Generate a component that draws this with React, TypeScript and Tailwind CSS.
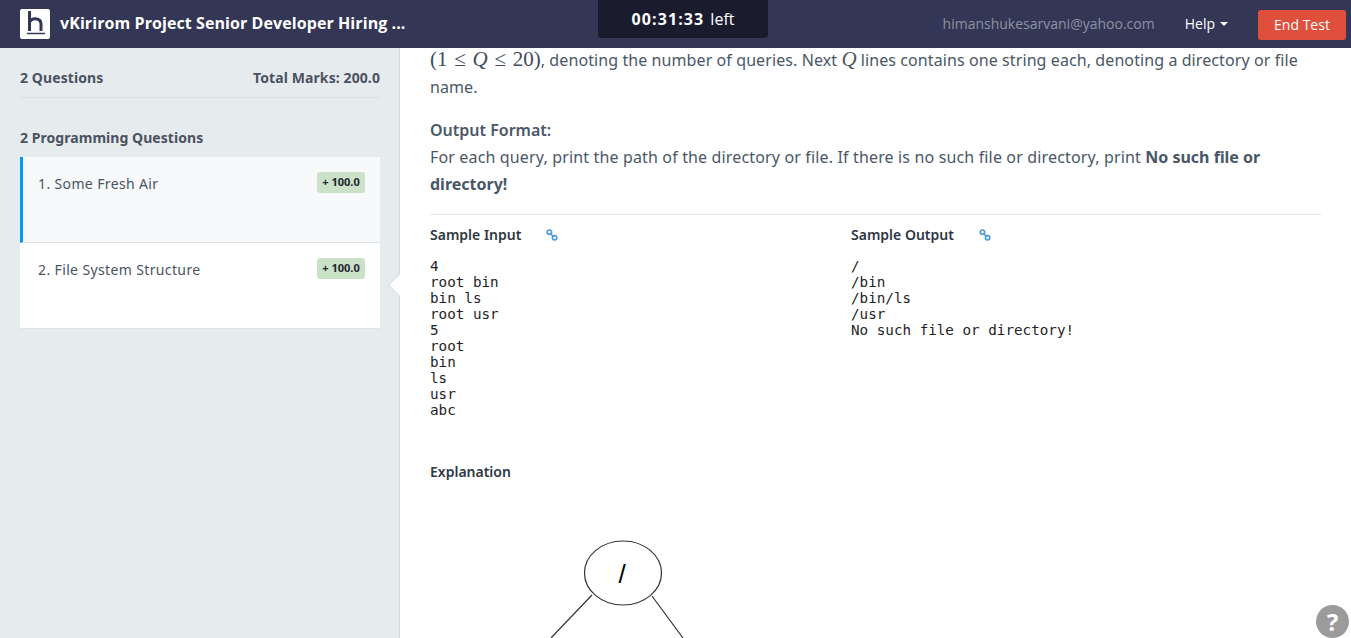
const sans = "font-['Noto_Sans','Open_Sans',sans-serif]"
const openSans = "font-['Open_Sans',sans-serif]"

const questions = [
  { title: "1. Some Fresh Air", active: true },
  { title: "2. File System Structure", active: false },
]

const sampleInput = ["4", "root bin", "bin ls", "root usr", "5", "root", "bin", "ls", "usr", "abc"]
const sampleOutput = ["/", "/bin", "/bin/ls", "/usr", "No such file or directory!"]

function LinkIcon() {
  return (
    <svg viewBox="0 0 12 12" className="h-3 w-3" fill="none" stroke="#4a9ad8" strokeWidth="1.6">
      <circle cx="3.4" cy="3.2" r="2.2" />
      <circle cx="8.6" cy="8.8" r="2.2" />
      <path d="M4.8 4.800 7.200 7.200" />
    </svg>
  )
}

function Header() {
  return (
    <header className="relative flex h-12 shrink-0 items-center bg-[#333654] pl-5 pr-[5px]">
      <div className="flex h-[30px] w-[30px] items-center justify-center rounded-[2px] bg-white">
        <svg viewBox="0 0 30 30" className="h-[30px] w-[30px]" fill="none" stroke="#333654">
          <path d="M9.500 2v20M9.500 13.500c1-2.500 3.200-3.800 5.500-3.800 3.500 0 6 1.800 6 5.300V22" strokeWidth="3" />
          <path d="M7 24.500h18" strokeWidth="1.500" />
        </svg>
      </div>
      <div className={`mb-[2px] ml-[10px] text-[16px] font-bold tracking-[0.08px] text-white ${openSans}`}>vKirirom Project Senior Developer Hiring ...</div>
      <div className={`absolute left-[598px] top-0 flex h-[38px] w-[170px] items-center justify-center rounded-b-[4px] bg-[#1a1c2e] pb-[1px] text-[16px] text-white ${openSans}`}>
        <span className="font-bold tracking-[1.1px]">00:31:33</span>
        <span className="ml-[6px]">left</span>
      </div>
      <div className={`mb-[2px] ml-auto text-[14px] text-[#8b93a5] ${openSans}`}>himanshukesarvani@yahoo.com</div>
      <div className={`mb-[2px] ml-[30px] flex items-center text-[14px] text-white ${openSans}`}>
        Help
        <span className="ml-[5px] mt-[1px] h-0 w-0 border-x-[4px] border-t-[4px] border-x-transparent border-t-white" />
      </div>
      <button className={`ml-[30px] mt-[2px] h-[30px] w-[88px] rounded-[3px] bg-[#e04f3b] pb-[2px] text-[14px] text-white ${openSans}`}>End Test</button>
    </header>
  )
}

function Sidebar() {
  return (
    <aside className="relative w-[400px] shrink-0 border-r border-r-[#d3dade] bg-[#e6ebed] pl-5 pr-[19px]">
      <div className="flex h-[50px] items-end justify-between border-b border-[#d9dfe3] pb-[9px] text-[14px] font-bold tracking-[0.1px] text-[#4a5361]">
        <span>2 Questions</span>
        <span>Total Marks: 200.0</span>
      </div>
      <div className="mt-[30px] text-[14px] font-bold leading-[20px] tracking-[0.05px] text-[#4a5361]">2 Programming Questions</div>
      <div className="mt-[9px]">
        {questions.map((q) => (
          <div
            key={q.title}
            className={
              q.active
                ? "flex h-[86px] items-start justify-between border-b border-b-[#dde3e7] border-l-[3px] border-l-[#0099ff] bg-[#f7f9fb] pl-[15px] pr-[15px] pt-[15px]"
                : "flex h-[86px] items-start justify-between border-b border-b-[#dde3e7] bg-white pl-[18px] pr-[15px] pt-[15px]"
            }
          >
            <span className="text-[14px] leading-[24px] tracking-[0.37px] text-[#4a5361]">{q.title}</span>
            <span className="flex h-[21px] w-[48px] items-center justify-center rounded-[3px] bg-[#cbe1c8] text-[11px] font-bold text-[#22282f]">+ 100.0</span>
          </div>
        ))}
      </div>
      <div className="absolute right-[-8px] top-[229px] h-[16px] w-[16px] rotate-45 border-b border-l border-[#d3dade] bg-white" />
    </aside>
  )
}

function MathRange() {
  return (
    <span className="font-['Liberation_Serif',serif] text-[21px] leading-none tracking-normal text-[#3f4a59]">
      (1 <span className="mx-[1.5px]">≤</span> <i>Q</i> <span className="mx-[1.5px]">≤</span> 20)
    </span>
  )
}

function SampleBlock({ title, lines }: { title: string; lines: string[] }) {
  return (
    <div>
      <div className="flex items-center gap-[25px] text-[14px] font-semibold leading-[20px] text-[#2f3742]">
        <span>{title}</span>
        <LinkIcon />
      </div>
      <pre className="mt-[13px] font-['DejaVu_Sans_Mono','Liberation_Mono',monospace] text-[14.25px] leading-[16px] text-[#1f2328]">{lines.join("\n")}</pre>
    </div>
  )
}

function Content() {
  return (
    <main className="-mt-px min-w-0 flex-1 bg-white pl-[30px] pr-[30px]">
      <p className="text-[16px] leading-[27px] tracking-[0.09px] text-[#4a5768]">
        <MathRange />, denoting the number of queries. Next{" "}
        <i className="font-['Liberation_Serif',serif] text-[21px] leading-none tracking-normal">Q</i> lines contains one string each, denoting a directory or file name.
      </p>
      <div className="mt-[16px] text-[16px] font-semibold leading-[27px] text-[#4a5768]">Output Format:</div>
      <p className="text-[16px] leading-[27px] tracking-[0.15px] text-[#4a5768]">
        For each query, print the path of the directory or file. If there is no such file or directory, print <b className="font-bold tracking-normal">No such file or directory!</b>
      </p>
      <div className="mt-[16px] grid grid-cols-[421px_1fr] border-t border-[#e3e6e9] pt-[10px]">
        <SampleBlock title="Sample Input" lines={sampleInput} />
        <SampleBlock title="Sample Output" lines={sampleOutput} />
      </div>
      <div className="mt-[44px] text-[14px] font-semibold leading-[20px] text-[#2f3742]">Explanation</div>
      <svg viewBox="0 0 300 160" className="ml-[100px] mt-[48px] h-[160px] w-[300px]" fill="none" stroke="#333" strokeWidth="1.200">
        <ellipse cx="93" cy="43" rx="38.500" ry="32" fill="#fff" />
        <path d="M62 65 21 108M122 66 153 108" />
        <text x="92" y="53" fill="#000" stroke="none" fontSize="26" textAnchor="middle" fontFamily="Liberation Sans, sans-serif">/</text>
      </svg>
    </main>
  )
}

export default function App() {
  return (
    <div className={`relative flex h-[638px] w-full flex-col overflow-hidden bg-white ${sans}`}>
      <Header />
      <div className="flex min-h-0 flex-1">
        <Sidebar />
        <Content />
      </div>
      <div className="absolute left-[1316px] top-[605px] flex h-[33px] w-[33px] items-center justify-center rounded-full bg-[#9b9b9b] text-[24px] font-bold leading-none text-white">?</div>
    </div>
  )
}
